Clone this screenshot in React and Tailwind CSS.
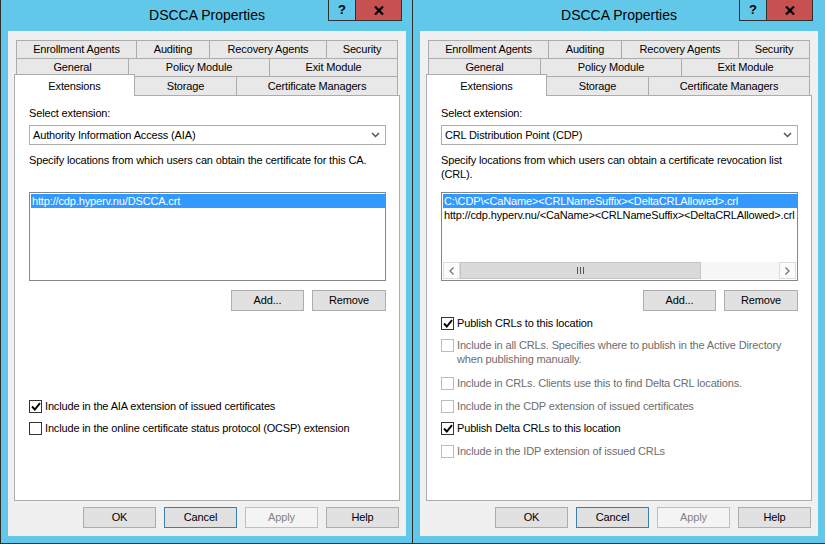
import React from 'react';

const row1 = [
  { label: 'Enrollment Agents', w: 'w-[121px] border-l' },
  { label: 'Auditing', w: 'w-[73px]' },
  { label: 'Recovery Agents', w: 'w-[117px]' },
  { label: 'Security', w: 'w-[71px]' },
];

const row2 = [
  { label: 'General', w: 'w-[113px] border-l' },
  { label: 'Policy Module', w: 'w-[141px]' },
  { label: 'Exit Module', w: 'w-[128px]' },
];

function Tab({ label, w, h }) {
  return (
    <div className={`${w} ${h} flex items-center justify-center border-t border-r border-[#acacac] bg-[#e8e8e8] whitespace-nowrap`}>
      {label}
    </div>
  );
}

function TitleBar({ right }) {
  return (
    <div className="relative flex h-[31px] items-center justify-center text-[14px] tracking-normal text-black">
      DSCCA Properties
      <div className={`absolute top-0 ${right} flex h-[21px] border-x border-b border-[#2f2f2f]`}>
        <div className="flex w-[27px] items-center justify-center border-r border-[#2f2f2f] text-[13px] font-bold">?</div>
        <div className="flex w-[45px] items-center justify-center bg-[#c75050]">
          <svg width="10" height="9" viewBox="0 0 10 9">
            <path d="M1 0.5 L9 8.5 M9 0.5 L1 8.5" stroke="#000" strokeWidth="2.2" />
          </svg>
        </div>
      </div>
    </div>
  );
}

function Combo({ value }) {
  return (
    <div className="mt-[4px] flex h-[20px] items-center justify-between border border-[#acacac] bg-white pl-[3px] pr-[5px]">
      <span>{value}</span>
      <svg width="9" height="6" viewBox="0 0 9 6">
        <path d="M1 1 L4.5 4.5 L8 1" stroke="#555" strokeWidth="1.5" fill="none" />
      </svg>
    </div>
  );
}

function Btn({ children, kind }) {
  const look =
    kind === 'focus'
      ? 'border-[#3c7fb1] bg-[#e1e1e1] text-black'
      : kind === 'off'
        ? 'border-[#bfbfbf] bg-[#f4f4f4] text-[#838383]'
        : 'border-[#adadad] bg-[#e1e1e1] text-black';
  return <div className={`flex h-[21px] w-[73px] items-center justify-center border ${look}`}>{children}</div>;
}

function Check({ checked, disabled, children, tall, mt }) {
  return (
    <div className={`flex items-start gap-[3px] ${mt} ${tall ? 'h-[28px] leading-[14px]' : 'h-[15px] leading-[15px]'}`}>
      <div
        className={`mt-[1px] flex h-[13px] w-[13px] shrink-0 items-center justify-center border bg-white ${
          disabled ? 'border-[#bcbcbc]' : 'border-[#333]'
        }`}
      >
        {checked && (
          <svg width="10" height="9" viewBox="0 0 10 9">
            <path d="M1 4.5 L3.8 7.5 L9 1.2" stroke="#000" strokeWidth="1.9" fill="none" />
          </svg>
        )}
      </div>
      <span className={disabled ? 'text-[#6d6d6d]' : 'text-black'}>{children}</span>
    </div>
  );
}

function Scrollbar() {
  return (
    <div className="mt-auto mb-[1px] mr-[1px] flex h-[17px] bg-[#f7f7f7]">
      <div className="flex w-[17px] items-center justify-center border border-[#dcdcdc] bg-[#fbfbfb]">
        <svg width="5" height="8" viewBox="0 0 5 8">
          <path d="M4.5 0.5 L1 4 L4.5 7.5" stroke="#707070" strokeWidth="1.2" fill="none" />
        </svg>
      </div>
      <div className="flex w-[241px] items-center justify-center border border-[#c6c6c6] bg-[#dadada]">
        <svg width="7" height="7" viewBox="0 0 7 7">
          <path d="M0.5 0 V7 M3.5 0 V7 M6.5 0 V7" stroke="#555" strokeWidth="1" />
        </svg>
      </div>
      <div className="flex-1" />
      <div className="flex w-[17px] items-center justify-center border border-[#dcdcdc] bg-[#fbfbfb]">
        <svg width="5" height="8" viewBox="0 0 5 8">
          <path d="M0.5 0.5 L4 4 L0.5 7.5" stroke="#707070" strokeWidth="1.2" fill="none" />
        </svg>
      </div>
    </div>
  );
}

function Window({ frame, titleRight, children }) {
  return (
    <div className={`flex h-[544px] shrink-0 flex-col border-b border-[#2f2f2f] bg-[#62c8e9] ${frame}`}>
      <TitleBar right={titleRight} />
      <div className="flex h-[505px] flex-col bg-[#f0f0f0] pt-[9px]">
        <div className="ml-[6px]">
          <div className="flex h-[18px] pl-[2px]">
            {row1.map((t) => (
              <Tab key={t.label} label={t.label} w={t.w} h="h-[18px]" />
            ))}
          </div>
          <div className="flex h-[18px] pl-[2px]">
            {row2.map((t) => (
              <Tab key={t.label} label={t.label} w={t.w} h="h-[18px]" />
            ))}
          </div>
          <div className="flex h-[19px] items-start">
            <div className="relative z-10 -mt-[2px] flex h-[22px] w-[121px] justify-center border-x border-t border-[#acacac] bg-white pt-[3px]">
              Extensions
            </div>
            <Tab label="Storage" w="w-[102px]" h="h-[19px]" />
            <Tab label="Certificate Managers" w="w-[161px]" h="h-[19px]" />
          </div>
        </div>
        <div className="mx-[6px] flex h-[406px] flex-col border border-[#acacac] bg-white pl-[14px] pr-[13px]">
          <div className="mt-[10px] h-[15px] leading-[15px]">Select extension:</div>
          {children}
        </div>
        <div className="mt-[6px] flex justify-end gap-[8px] pr-[7px]">
          <Btn>OK</Btn>
          <Btn kind="focus">Cancel</Btn>
          <Btn kind="off">Apply</Btn>
          <Btn>Help</Btn>
        </div>
      </div>
    </div>
  );
}

function AddRemove() {
  return (
    <div className="mt-[9px] flex justify-end gap-[8px]">
      <Btn>Add...</Btn>
      <div className="flex h-[21px] w-[74px] items-center justify-center border border-[#adadad] bg-[#e1e1e1]">Remove</div>
    </div>
  );
}

export default function App() {
  return (
    <div className="flex h-[544px] w-[825px] overflow-hidden bg-[#62c8e9] font-['Liberation_Sans',Arial,sans-serif] text-[11px] tracking-[-0.15px] text-black">
      <Window frame="w-[413px] border-x pl-[7px] pr-[6px]" titleRight="right-[4px]">
        <Combo value="Authority Information Access (AIA)" />
        <div className="mt-[8px] h-[39px] leading-[14px]">
          Specify locations from which users can obtain the certificate for this CA.
        </div>
        <div className="flex h-[89px] flex-col border border-[#828790] bg-white pt-[1px] pl-[1px]">
          <div className="h-[14px] bg-[#3399ff] px-[1px] leading-[14px] whitespace-nowrap text-white">
            http://cdp.hyperv.nu/DSCCA.crt
          </div>
        </div>
        <AddRemove />
        <Check checked mt="mt-[88px]">Include in the AIA extension of issued certificates</Check>
        <Check mt="mt-[7px]">Include in the online certificate status protocol (OCSP) extension</Check>
      </Window>
      <Window frame="w-[412px] px-[7px]" titleRight="right-[5px]">
        <Combo value="CRL Distribution Point (CDP)" />
        <div className="mt-[8px] h-[39px] leading-[14px]">
          Specify locations from which users can obtain a certificate revocation list
          <br />
          (CRL).
        </div>
        <div className="flex h-[89px] flex-col overflow-hidden border border-[#828790] bg-white pt-[1px] pl-[1px]">
          <div className="h-[14px] bg-[#3399ff] px-[1px] leading-[14px] whitespace-nowrap text-white">
            {'C:\\CDP\\<CaName><CRLNameSuffix><DeltaCRLAllowed>.crl'}
          </div>
          <div className="h-[14px] px-[1px] leading-[14px] whitespace-nowrap">
            {'http://cdp.hyperv.nu/<CaName><CRLNameSuffix><DeltaCRLAllowed>.crl'}
          </div>
          <Scrollbar />
        </div>
        <AddRemove />
        <Check checked mt="mt-[5px]">Publish CRLs to this location</Check>
        <Check disabled tall mt="mt-[7px]">
          Include in all CRLs. Specifies where to publish in the Active Directory
          <br />
          when publishing manually.
        </Check>
        <Check disabled mt="mt-[10px]">Include in CRLs. Clients use this to find Delta CRL locations.</Check>
        <Check disabled mt="mt-[8px]">Include in the CDP extension of issued certificates</Check>
        <Check checked mt="mt-[7px]">Publish Delta CRLs to this location</Check>
        <Check disabled mt="mt-[8px]">Include in the IDP extension of issued CRLs</Check>
      </Window>
    </div>
  );
}
